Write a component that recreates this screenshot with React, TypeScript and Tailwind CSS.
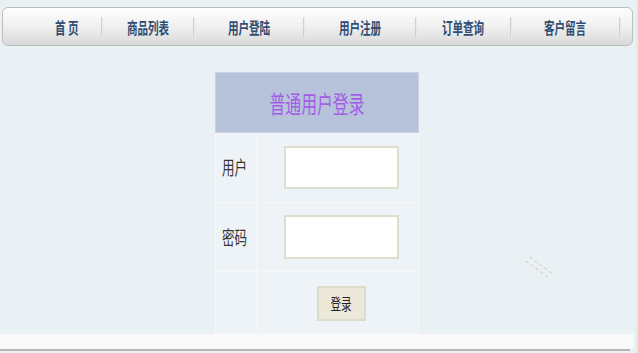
import type { ReactNode } from "react";

const navItems = [
  { label: "首 页", w: "w-[68px]" },
  { label: "商品列表", w: "w-[90px]" },
  { label: "用户登陆", w: "w-[108px]" },
  { label: "用户注册", w: "w-[110px]" },
  { label: "订单查询", w: "w-[93px]" },
  { label: "客户留言", w: "w-[107px]" },
];

function Squeeze({ children, className }: { children: ReactNode; className?: string }) {
  // the original page is rendered horizontally squashed
  return <span className={`inline-block scale-x-[0.66] whitespace-nowrap ${className ?? ""}`}>{children}</span>;
}

function NavBar() {
  return (
    <div className="mx-[2px] mt-[7px] h-[39px] w-[631px] rounded-[6px] border border-[#bcbcbc] bg-gradient-to-b from-[#fefefe] via-[#f0f0f0] to-[#d9d9d9] shadow-[inset_0_1px_0_#ffffff]">
      <ul className="flex h-full items-center pl-[30px]">
        {navItems.map((item) => (
          <li key={item.label} className="flex h-full items-center">
            <a className={`${item.w} flex justify-center text-[16px] font-semibold text-[#2f4e73]`}>
              <Squeeze>{item.label}</Squeeze>
            </a>
            <span className="h-[20px] w-[2px] bg-gradient-to-r from-[#c4c4c4] to-[#f6f6f6]" />
          </li>
        ))}
      </ul>
    </div>
  );
}

function LoginForm() {
  return (
    <div className="ml-[215px] mt-[26px] w-[204px]">
      <div className="flex h-[61px] items-center justify-center border border-[#c9d3e4] bg-[#b7c3da]">
        <Squeeze className="text-[24px] text-[#a25de6]">普通用户登录</Squeeze>
      </div>
      <div className="flex h-[70px] border-x border-b border-[#f5f8fb] bg-[#eef3f8]">
        <div className="flex w-[41px] items-center border-r border-[#f5f8fb] pl-[6px] text-[19px] text-[#333]">
          <Squeeze className="origin-left">用户</Squeeze>
        </div>
        <div className="flex flex-1 items-center pl-[27px]">
          <input className="h-[43px] w-[115px] border-2 border-[#dcdfcd] bg-white outline-none" />
        </div>
      </div>
      <div className="flex h-[69px] border-x border-b border-[#f5f8fb] bg-[#eef3f8]">
        <div className="flex w-[41px] items-center border-r border-[#f5f8fb] pl-[6px] text-[19px] text-[#333]">
          <Squeeze className="origin-left">密码</Squeeze>
        </div>
        <div className="flex flex-1 items-center pl-[27px]">
          <input type="password" className="h-[44px] w-[115px] border-2 border-[#dcdfcd] bg-white outline-none" />
        </div>
      </div>
      <div className="flex h-[62px] border-x border-[#f5f8fb] bg-[#eef3f8]">
        <div className="w-[41px] border-r border-[#f5f8fb]" />
        <div className="flex flex-1 items-center pl-[60px]">
          <button className="flex h-[35px] w-[49px] items-center justify-center border-2 border-[#dcdccb] bg-[#ede9da] text-[16px] text-[#222]">
            <Squeeze>登录</Squeeze>
          </button>
        </div>
      </div>
    </div>
  );
}

export default function App() {
  return (
    <div
      className="relative flex h-[353px] w-[638px] flex-col overflow-hidden border-r-2 border-[#dfeee2] bg-[#e9f1f5]"
      style={{ fontFamily: '"Noto Sans CJK SC", "Noto Sans", sans-serif' }}
    >
      <NavBar />
      <LoginForm />
      <svg className="absolute left-[526px] top-[255px]" width="32" height="26" viewBox="0 0 32 26">
        <g stroke="#d9b8c6" strokeWidth="1" strokeDasharray="3 3">
          <line x1="4" y1="2" x2="28" y2="20" />
          <line x1="0" y1="6" x2="24" y2="24" />
        </g>
      </svg>
      <div className="h-[15px] w-[634px] bg-[#f9f9f9]" />
      <div className="h-[2px] w-[630px] bg-[#b5b5b5]" />
      <div className="flex-1" />
    </div>
  );
}
